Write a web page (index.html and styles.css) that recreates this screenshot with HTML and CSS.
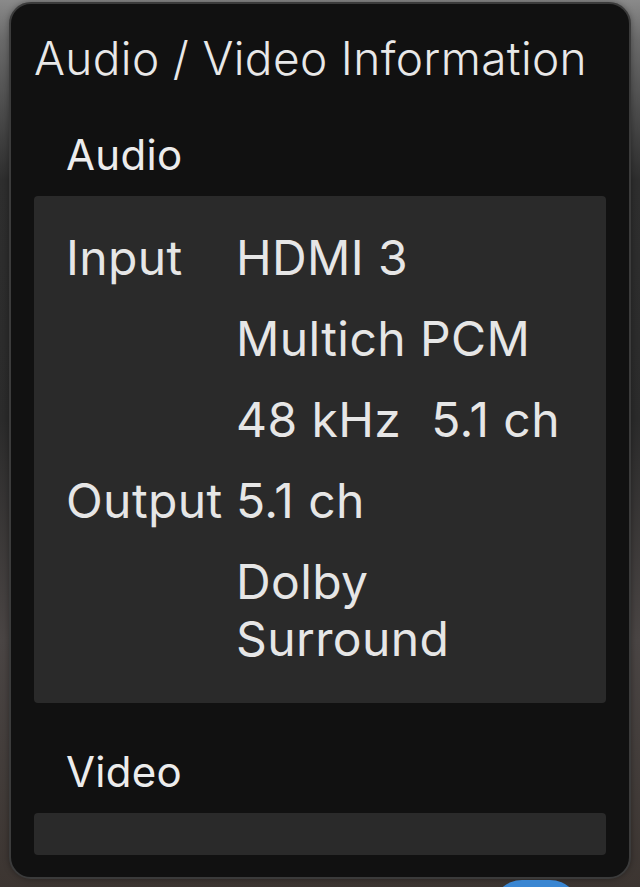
FILE: index.html
```html
<!DOCTYPE html>
<html>
<head>
<meta charset="utf-8">
<link rel="stylesheet" href="styles.css">
</head>
<body>
<div class="backdrop">
  <div class="modal">
    <h1 class="title">Audio / Video Information</h1>
    <h2 class="section-title">Audio</h2>
    <div class="panel">
      <div class="row">
        <div class="label">Input</div>
        <div class="values">
          <div class="value">HDMI 3</div>
          <div class="value">Multich PCM</div>
          <div class="value"><span class="part">48 kHz</span><span class="part">5.1 ch</span></div>
        </div>
      </div>
      <div class="row">
        <div class="label">Output</div>
        <div class="values">
          <div class="value">5.1 ch</div>
          <div class="value">Dolby<br>Surround</div>
        </div>
      </div>
    </div>
    <h2 class="section-title video">Video</h2>
    <div class="panel panel-video"></div>
  </div>
  <div class="blue-button"></div>
</div>
</body>
</html>
```
FILE: styles.css
```css
html, body {
  margin: 0;
  padding: 0;
}
body {
  width: 640px;
  height: 887px;
  overflow: hidden;
  font-family: "Inter", "Noto Sans", sans-serif;
  color: #e8e8e8;
}
.backdrop {
  position: relative;
  width: 640px;
  height: 887px;
  overflow: hidden;
  background: linear-gradient(180deg, #8a8a8a 0px, #6a6a6a 40px, #2e2e2e 180px, #2b2b2b 420px, #4a4544 640px, #3c3531 887px);
  padding-top: 2px;
  box-sizing: border-box;
}
.modal {
  margin-left: 9px;
  width: 622px;
  height: 877px;
  box-sizing: border-box;
  border: 2px solid #3b3b3b;
  border-radius: 22px;
  background: #111111;
  padding: 27px 23px 0 23px;
  overflow: hidden;
  box-shadow: 0 0 6px rgba(0,0,0,0.35);
}
.title {
  margin: 0;
  font-size: 46px;
  line-height: 54px;
  font-weight: 300;
  letter-spacing: 0.35px;
  color: #e8e8e8;
  white-space: nowrap;
}
.section-title {
  margin: 46px 0 17px 0;
  padding-left: 32px;
  font-size: 42px;
  line-height: 48px;
  font-weight: 400;
  letter-spacing: 0.3px;
  color: #ececec;
}
.section-title.video {
  margin-top: 45px;
}
.panel {
  background: #2a2a2a;
  border-radius: 4px;
  padding: 21px 0 24px 32px;
}
.panel-video {
  height: 42px;
  padding: 0;
}
.row {
  display: grid;
  grid-template-columns: 170px 1fr;
}
.label, .value {
  font-size: 48px;
  line-height: 57px;
  padding: 12px 0;
  letter-spacing: 0.4px;
  color: #e6e6e6;
  white-space: nowrap;
}
.values {
  display: flex;
  flex-direction: column;
}
.part + .part {
  margin-left: 30px;
}
.blue-button {
  position: absolute;
  left: 492px;
  top: 880px;
  width: 88px;
  height: 60px;
  border-radius: 44px;
  background: #3a86d2;
}
```
